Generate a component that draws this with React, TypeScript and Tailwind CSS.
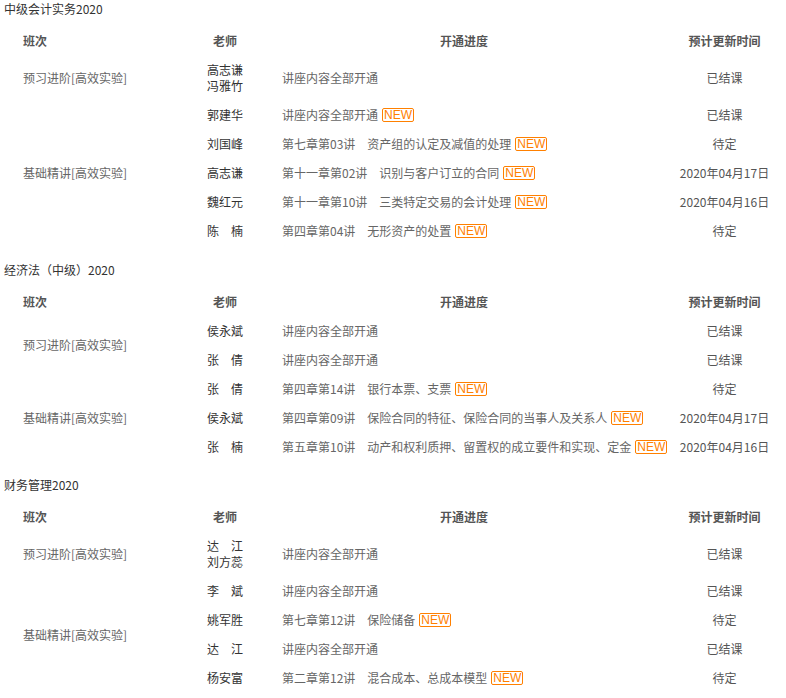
import React from "react";

type Row = { teachers: string[]; progress: string; isNew?: boolean; date: string };
type Group = { cls: string; rows: Row[] };
type Section = { title: string; groups: Group[] };

const sections: Section[] = [
  {
    title: "中级会计实务2020",
    groups: [
      {
        cls: "预习进阶[高效实验]",
        rows: [{ teachers: ["高志谦", "冯雅竹"], progress: "讲座内容全部开通", date: "已结课" }],
      },
      {
        cls: "基础精讲[高效实验]",
        rows: [
          { teachers: ["郭建华"], progress: "讲座内容全部开通", isNew: true, date: "已结课" },
          { teachers: ["刘国峰"], progress: "第七章第03讲　资产组的认定及减值的处理", isNew: true, date: "待定" },
          { teachers: ["高志谦"], progress: "第十一章第02讲　识别与客户订立的合同", isNew: true, date: "2020年04月17日" },
          { teachers: ["魏红元"], progress: "第十一章第10讲　三类特定交易的会计处理", isNew: true, date: "2020年04月16日" },
          { teachers: ["陈　楠"], progress: "第四章第04讲　无形资产的处置", isNew: true, date: "待定" },
        ],
      },
    ],
  },
  {
    title: "经济法（中级）2020",
    groups: [
      {
        cls: "预习进阶[高效实验]",
        rows: [
          { teachers: ["侯永斌"], progress: "讲座内容全部开通", date: "已结课" },
          { teachers: ["张　倩"], progress: "讲座内容全部开通", date: "已结课" },
        ],
      },
      {
        cls: "基础精讲[高效实验]",
        rows: [
          { teachers: ["张　倩"], progress: "第四章第14讲　银行本票、支票", isNew: true, date: "待定" },
          { teachers: ["侯永斌"], progress: "第四章第09讲　保险合同的特征、保险合同的当事人及关系人", isNew: true, date: "2020年04月17日" },
          { teachers: ["张　楠"], progress: "第五章第10讲　动产和权利质押、留置权的成立要件和实现、定金", isNew: true, date: "2020年04月16日" },
        ],
      },
    ],
  },
  {
    title: "财务管理2020",
    groups: [
      {
        cls: "预习进阶[高效实验]",
        rows: [{ teachers: ["达　江", "刘方蕊"], progress: "讲座内容全部开通", date: "已结课" }],
      },
      {
        cls: "基础精讲[高效实验]",
        rows: [
          { teachers: ["李　斌"], progress: "讲座内容全部开通", date: "已结课" },
          { teachers: ["姚军胜"], progress: "第七章第12讲　保险储备", isNew: true, date: "待定" },
          { teachers: ["达　江"], progress: "讲座内容全部开通", date: "已结课" },
          { teachers: ["杨安富"], progress: "第二章第12讲　混合成本、总成本模型", isNew: true, date: "待定" },
        ],
      },
    ],
  },
];

function NewBadge() {
  return (
    <span className="ml-[4px] flex h-[14px] items-center rounded-[2px] border border-[#ff8000] px-[1px] font-['Liberation_Sans',sans-serif] text-[12px] leading-[12px] text-[#ff8000]">
      NEW
    </span>
  );
}

export default function App() {
  return (
    <div className="w-[786px] bg-white font-['Noto_Sans_CJK_SC',sans-serif] text-[12px]">
      {sections.map((s, si) => (
        <div key={si} className={si === 0 ? "" : "mt-[15px]"}>
          <div className="pl-[4px] leading-[18px] text-[#333]">{s.title}</div>
          <table className="mt-[8.5px] w-[781px] table-fixed border-collapse">
            <colgroup>
              <col className="w-[190px]" />
              <col className="w-[70px]" />
              <col className="w-[408px]" />
              <col className="w-[113px]" />
            </colgroup>
            <thead>
              <tr className="font-bold text-[#555]">
                <th className="py-[6.5px] pl-[23px] text-left leading-4">班次</th>
                <th className="py-[6.5px] text-center leading-4">老师</th>
                <th className="py-[6.5px] text-center leading-4">开通进度</th>
                <th className="py-[6.5px] text-center leading-4">预计更新时间</th>
              </tr>
            </thead>
            <tbody>
              {s.groups.map((g, gi) =>
                g.rows.map((r, ri) => (
                  <tr key={gi + "-" + ri}>
                    {ri === 0 && (
                      <td rowSpan={g.rows.length} className="py-[6.5px] pl-[23px] align-middle leading-4 text-[#666]">
                        {g.cls}
                      </td>
                    )}
                    <td className="py-[6.5px] text-center align-middle leading-4 text-[#333]">
                      {r.teachers.map((t, ti) => (
                        <div key={ti}>{t}</div>
                      ))}
                    </td>
                    <td className="py-[6.5px] pl-[22px] align-middle text-[#666]">
                      <div className="flex h-4 items-center whitespace-nowrap leading-4">
                        <span>{r.progress}</span>
                        {r.isNew && <NewBadge />}
                      </div>
                    </td>
                    <td className="py-[6.5px] text-center align-middle leading-4 text-[#555]">{r.date}</td>
                  </tr>
                ))
              )}
            </tbody>
          </table>
        </div>
      ))}
    </div>
  );
}
